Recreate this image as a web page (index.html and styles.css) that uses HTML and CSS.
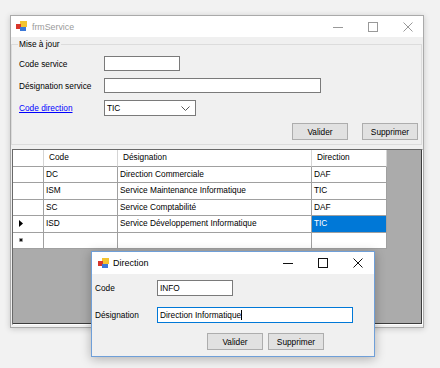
FILE: index.html
```html
<!DOCTYPE html>
<html lang="fr">
<head>
  <meta charset="UTF-8" />
  <title>frmService</title>
  <link rel="stylesheet" href="styles.css">
</head>
<body>
<div class="desk">

  <div class="win main">
    <div class="titlebar">
      <svg class="appicon" width="11" height="11" viewBox="0 0 11 11">
        <rect x="4" y="0" width="7" height="6" fill="#f4c430"/>
        <rect x="0" y="3" width="5" height="5" fill="#d8362b"/>
        <rect x="4" y="6" width="6" height="4" fill="#3b78d8"/>
      </svg>
      <span class="title">frmService</span>
      <div class="caps">
        <span class="cap"><svg width="10" height="10" viewBox="0 0 10 10"><path d="M0 5.5h10" stroke="currentColor"/></svg></span>
        <span class="cap"><svg width="10" height="10" viewBox="0 0 10 10"><rect x="0.5" y="0.5" width="9" height="9" fill="none" stroke="currentColor"/></svg></span>
        <span class="cap"><svg width="10" height="10" viewBox="0 0 10 10"><path d="M0.5 0.5l9 9M9.5 0.5l-9 9" stroke="currentColor"/></svg></span>
      </div>
    </div>

    <div class="client">
      <fieldset class="group">
        <legend>Mise à jour</legend>
        <div class="row">
          <span class="lbl">Code service</span>
          <div class="field code"></div>
        </div>
        <div class="row">
          <span class="lbl">Désignation service</span>
          <div class="field desig"></div>
        </div>
        <div class="row combo-row">
          <span class="lbl link">Code direction</span>
          <div class="field combo">
            <span>TIC</span>
            <svg width="9" height="5" viewBox="0 0 9 5"><path d="M0.5 0.5l4 4 4-4" fill="none" stroke="#555"/></svg>
          </div>
        </div>
        <div class="actions">
          <button class="btn">Valider</button>
          <button class="btn">Supprimer</button>
        </div>
      </fieldset>

      <div class="grid">
        <table>
          <colgroup>
            <col class="c-head"><col class="c-code"><col class="c-desig"><col class="c-dir">
          </colgroup>
          <tr class="hdr">
            <th class="rh"></th><th>Code</th><th>Désignation</th><th>Direction</th>
          </tr>
          <tr><td class="rh"></td><td>DC</td><td>Direction Commerciale</td><td>DAF</td></tr>
          <tr><td class="rh"></td><td>ISM</td><td>Service Maintenance Informatique</td><td>TIC</td></tr>
          <tr><td class="rh"></td><td>SC</td><td>Service Comptabilité</td><td>DAF</td></tr>
          <tr>
            <td class="rh"><svg width="4" height="7" viewBox="0 0 4 7"><path d="M0 0l4 3.5-4 3.5z" fill="#000"/></svg></td>
            <td>ISD</td><td>Service Développement Informatique</td><td class="sel">TIC</td>
          </tr>
          <tr>
            <td class="rh"><svg width="4" height="4" viewBox="0 0 4 4"><path d="M2 0v4M0 2h4M0.6 0.6l2.8 2.8M3.4 0.6l-2.8 2.8" stroke="#000" stroke-width="0.8"/></svg></td>
            <td></td><td></td><td></td>
          </tr>
        </table>
      </div>
    </div>
  </div>

  <div class="win dialog">
    <div class="titlebar">
      <svg class="appicon" width="11" height="11" viewBox="0 0 11 11">
        <rect x="4" y="0" width="7" height="6" fill="#f4c430"/>
        <rect x="0" y="3" width="5" height="5" fill="#d8362b"/>
        <rect x="4" y="6" width="6" height="4" fill="#3b78d8"/>
      </svg>
      <span class="title">Direction</span>
      <div class="caps">
        <span class="cap"><svg width="10" height="10" viewBox="0 0 10 10"><path d="M0 5.5h10" stroke="currentColor"/></svg></span>
        <span class="cap"><svg width="10" height="10" viewBox="0 0 10 10"><rect x="0.5" y="0.5" width="9" height="9" fill="none" stroke="currentColor"/></svg></span>
        <span class="cap"><svg width="10" height="10" viewBox="0 0 10 10"><path d="M0.5 0.5l9 9M9.5 0.5l-9 9" stroke="currentColor"/></svg></span>
      </div>
    </div>
    <div class="client">
      <div class="row">
        <span class="lbl">Code</span>
        <div class="field d-code">INFO</div>
      </div>
      <div class="row">
        <span class="lbl">Désignation</span>
        <div class="field d-desig focus">Direction Informatique<span class="caret"></span></div>
      </div>
      <div class="actions">
        <button class="btn">Valider</button>
        <button class="btn">Supprimer</button>
      </div>
    </div>
  </div>

</div>
</body>
</html>
```

FILE: styles.css
```css
body {
  margin: 0;
  background: #f2f2f2;
  font-family: "Liberation Sans", Arial, sans-serif;
  font-size: 8.3px;
  color: #000;
}

.desk {
  position: relative;
  box-sizing: border-box;
  min-height: 368px;
  padding: 15px 0 0 10px;
}

.win {
  box-sizing: border-box;
  background: #f0f0f0;
  display: flex;
  flex-direction: column;
}

.main {
  width: 414px;
  height: 313px;
  border: 1px solid #aaaaaa;
  box-shadow: 0 1px 6px rgba(0, 0, 0, 0.18);
}

.titlebar {
  display: flex;
  align-items: center;
  height: 21px;
  background: #fff;
  flex: none;
}

.appicon {
  margin-left: 5px;
  flex: none;
}

.title {
  margin-left: 5px;
  font-size: 8.8px;
  color: #9a9a9a;
}

.caps {
  margin-left: auto;
  display: flex;
  gap: 5px;
  color: #999;
}

.cap {
  width: 30px;
  display: flex;
  justify-content: center;
}

/* group box */
.group {
  margin: 2px 2px 0 0;
  padding: 7px 3px 4px 7px;
  border: 1px solid #dcdcdc;
  width: 411px;
  box-sizing: border-box;
  min-width: 0;
}

.group legend {
  padding: 0 1px;
  margin-left: -1px;
  line-height: 10px;
}

.row {
  display: flex;
  align-items: center;
  height: 15px;
  margin-bottom: 7px;
}

.combo-row {
  height: 16px;
}

.lbl {
  width: 85px;
  flex: none;
}

.link {
  color: #0000ff;
  text-decoration: underline;
}

.field {
  box-sizing: border-box;
  height: 100%;
  background: #fff;
  border: 1px solid #7a7a7a;
  padding-left: 2px;
  display: flex;
  align-items: center;
}

.code { width: 76px; }
.desig { width: 217px; }

.combo {
  width: 92px;
  justify-content: space-between;
  padding-right: 5px;
}

.actions {
  display: flex;
  justify-content: flex-end;
  gap: 14px;
}

.btn {
  box-sizing: border-box;
  width: 56px;
  height: 17px;
  padding: 0;
  border: 1px solid #adadad;
  background: #e1e1e1;
  font-family: "Liberation Sans", Arial, sans-serif;
  font-size: 8.3px;
  color: #000;
}

/* data grid */
.grid {
  margin: 4px 0 0 1px;
  width: 411px;
  height: 176px;
  box-sizing: border-box;
  background: #ababab;
  border: 1px solid;
  border-color: #696969 #fff #fff #696969;
  box-shadow: inset -1px -1px 0 #3c3c3c;
}

.grid table {
  border-collapse: separate;
  border-spacing: 0;
  table-layout: fixed;
  width: 374px;
  background: #fff;
}

.c-head { width: 31px; }
.c-code { width: 74px; }
.c-desig { width: 194px; }
.c-dir { width: 75px; }

.grid th,
.grid td {
  height: 15.5px;
  padding: 0 0 0 2px;
  border-right: 1px solid #a0a0a0;
  border-bottom: 1px solid #a0a0a0;
  font-weight: normal;
  text-align: left;
  white-space: nowrap;
  overflow: hidden;
  line-height: 15.5px;
}

.grid th {
  padding-left: 5px;
  border-right-color: #d5d5d5;
}

.grid .rh {
  padding: 0 0 0 6px;
  vertical-align: middle;
}

.grid .rh svg {
  display: block;
}

.grid .sel {
  background: #0078d7;
  color: #fff;
}

/* dialog window */
.dialog {
  position: absolute;
  left: 91px;
  top: 251px;
  width: 284px;
  height: 106px;
  border: 1px solid #6f9fd8;
  box-shadow: 0 2px 10px rgba(0, 0, 0, 0.28);
}

.dialog .titlebar {
  height: 22px;
}

.dialog .appicon {
  margin-left: 6px;
}

.dialog .title {
  margin-left: 4px;
  font-size: 9px;
  color: #000;
}

.dialog .caps {
  gap: 3px;
  color: #111;
}

.dialog .cap {
  width: 32px;
}

.dialog .client {
  padding: 6px 0 0 3px;
}

.dialog .row {
  height: 16px;
  margin-bottom: 11px;
}

.dialog .row + .row {
  margin-bottom: 10px;
}

.dialog .lbl {
  width: 62px;
}

.d-code { width: 76px; }
.d-desig { width: 196px; }

.focus {
  border-color: #0078d7;
}

.caret {
  display: inline-block;
  width: 1px;
  height: 10px;
  background: #000;
}

.dialog .actions {
  justify-content: flex-start;
  padding-left: 112px;
  gap: 5px;
}
```
